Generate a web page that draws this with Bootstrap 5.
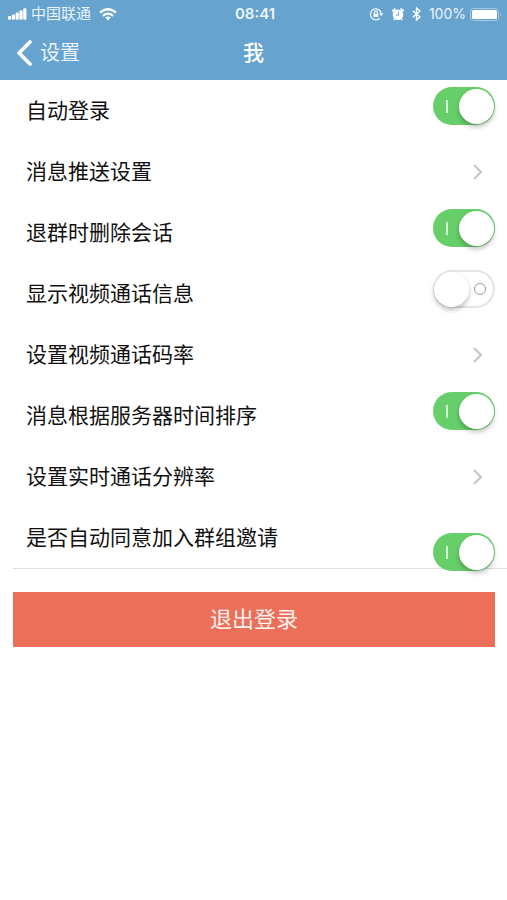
<!DOCTYPE html>
<html lang="zh-CN">
<head>
<meta charset="utf-8">
<meta name="viewport" content="width=device-width, initial-scale=1">
<title>设置</title>
<link href="https://cdn.jsdelivr.net/npm/bootstrap@5.3.0/dist/css/bootstrap.min.css" rel="stylesheet">
<style>
  body { font-family: "Liberation Sans", "Noto Sans CJK SC", sans-serif; color: #111; background: #fff; }
  .app-header { background: #66a3cf; color: #fff; }
  .status-bar { height: 28px; padding: 0 5px 0 8px; font-size: 15px; line-height: 28px; color: #eaf4fb; }
  .status-side { flex: 1 1 0; }
  .status-clock { font-family: Inter, sans-serif; font-size: 15px; font-weight: 600; }
  .status-level { font-family: Inter, sans-serif; font-size: 14px; }
  .title-bar { height: 52px; padding: 0 16px; }
  .title-bar h1 { font-size: 21px; font-weight: 500; line-height: 50px; }
  .back-link { font-size: 20px; line-height: 50px; color: #eaf4fb; gap: 7px; }
  .setting-row { height: 61px; padding: 0 12px 0 26px; font-size: 21px; line-height: 61px; color: #111; }
  a.setting-row { padding-right: 24px; }
  .toggle { appearance: none; display: flex; align-items: center; flex: none; width: 62px; height: 38px; margin: 7px 0 0; padding: 1px; border-radius: 19px; background: #67cf6a; cursor: pointer; }
  .toggle::before { content: ""; order: 2; width: 35px; height: 35px; margin-left: auto; border-radius: 50%; background: #fff; box-shadow: 0 3px 5px rgba(0, 0, 0, .25); }
  .toggle::after { content: ""; order: 1; width: 2px; height: 13px; margin-left: 12px; background: #d5f5d6; }
  .toggle:not(:checked) { background: #fff; box-shadow: inset 0 0 0 2px #e4e4e4; }
  .toggle:not(:checked)::before { order: 0; margin-left: 0; }
  .toggle:not(:checked)::after { width: 12px; height: 12px; margin: 0 8px 0 auto; border: 1px solid #999; border-radius: 50%; background: none; }
  .toggle-low { align-self: flex-end; margin: 0 0 -3px; }
  .list-end { margin-left: 13px; border-top: 1px solid #dedede; }
  .logout-area { padding: 23px 12px 0 13px; }
  .btn-logout, .btn-logout:hover { height: 55px; padding: 0; border: 0; border-radius: 0; background: #ec6f59; color: #fff1ee; font-size: 22px; }
</style>
<script defer src="https://cdn.jsdelivr.net/npm/bootstrap@5.3.0/dist/js/bootstrap.bundle.min.js"></script>
</head>
<body>
<header class="app-header">
  <div class="status-bar d-flex align-items-center">
    <div class="status-side d-flex align-items-center">
      <svg class="me-1" width="19" height="12" viewBox="0 0 20 12" fill="#fff" aria-hidden="true"><rect y="8" width="3.4" height="4" rx="1.3"/><rect x="4" y="6.5" width="3.4" height="5.5" rx="1.3"/><rect x="8" y="4.5" width="3.4" height="7.5" rx="1.3"/><rect x="12" y="2" width="3.4" height="10" rx="1.3"/><rect x="16" width="3.4" height="12" rx="1.3"/></svg>
      <span>中国联通</span>
      <svg class="ms-2" width="18" height="13" viewBox="0 0 18 13" fill="none" stroke="#fff" stroke-width="2.2" aria-hidden="true"><path d="M1 4.7Q9-2.2 17 4.7M3.9 7.8Q9 3.5 14.1 7.8"/><path d="M6.2 9.6Q9 7.4 11.8 9.6L9 12.6Z" fill="#fff" stroke="none"/></svg>
    </div>
    <span class="status-clock">08:41</span>
    <div class="status-side d-flex align-items-center justify-content-end">
      <svg width="15" height="14" viewBox="0 0 15 14" fill="none" stroke="#eaf4fb" stroke-width="1.3" aria-hidden="true"><path d="M10.8 11.2A5.5 5.5 0 1 1 12.3 6.5"/><path d="M10 6.2h4.6l-2.3 3z" fill="#eaf4fb" stroke="none"/><rect x="4.4" y="6.4" width="5" height="3.6" fill="#eaf4fb" stroke="none"/><path d="M5.4 6.6V5.3a1.5 1.5 0 0 1 3 0v1.3"/></svg>
      <svg class="mx-2" width="12" height="13" viewBox="0 0 12 13" aria-hidden="true"><circle cx="6" cy="6.7" r="5.3" fill="#fff"/><path d="M1 2.8 2.8 1.2M11 2.8 9.2 1.2" stroke="#fff" stroke-width="2" stroke-linecap="round"/><path d="M2.6 10.8 1.9 11.8M9.4 10.8l.7 1" stroke="#fff" stroke-width="1.2" stroke-linecap="round"/><path d="M6.6 3.9v3.2H3.8" fill="none" stroke="#66a3cf" stroke-width="1"/></svg>
      <svg class="me-2" width="9" height="14" viewBox="0 0 9 14" fill="none" stroke="#fff" stroke-width="1.4" aria-hidden="true"><path d="M.8 3.8 8 10 4.5 13V1L8 4 .8 10.2"/></svg>
      <span class="status-level">100%</span>
      <svg class="ms-1" width="32" height="13" viewBox="0 0 32 13" aria-hidden="true"><rect x=".5" y=".5" width="28" height="12" rx="3" fill="none" stroke="#a3c8e3"/><rect x="2" y="2" width="25" height="9" rx="1.5" fill="#fff"/><path d="M30 4.5v4q2-2 0-4z" fill="#a3c8e3"/></svg>
    </div>
  </div>
  <nav class="title-bar d-flex align-items-start" aria-label="导航">
    <div class="status-side"><a href="#" class="back-link d-inline-flex align-items-center text-decoration-none"><svg width="17" height="27" viewBox="0 0 17 27" fill="none" stroke="#fff" stroke-width="3.6" stroke-linecap="round" stroke-linejoin="round" aria-hidden="true"><path d="M14 2 3 13l11 11"/></svg>设置</a></div>
    <h1 class="m-0">我</h1>
    <div class="status-side"></div>
  </nav>
</header>
<main>
  <div class="setting-row d-flex justify-content-between align-items-start"><label for="auto-login">自动登录</label><input class="toggle" type="checkbox" role="switch" id="auto-login" checked></div>
  <a href="#" class="setting-row d-flex justify-content-between align-items-center text-decoration-none">消息推送设置<svg width="10" height="16" fill="none" stroke="#c5c5c9" stroke-width="2" aria-hidden="true"><path d="m1 1 7 7-7 7"/></svg></a>
  <div class="setting-row d-flex justify-content-between align-items-start"><label for="delete-chat">退群时删除会话</label><input class="toggle" type="checkbox" role="switch" id="delete-chat" checked></div>
  <div class="setting-row d-flex justify-content-between align-items-start"><label for="video-info">显示视频通话信息</label><input class="toggle" type="checkbox" role="switch" id="video-info"></div>
  <a href="#" class="setting-row d-flex justify-content-between align-items-center text-decoration-none">设置视频通话码率<svg width="10" height="16" fill="none" stroke="#c5c5c9" stroke-width="2" aria-hidden="true"><path d="m1 1 7 7-7 7"/></svg></a>
  <div class="setting-row d-flex justify-content-between align-items-start"><label for="server-sort">消息根据服务器时间排序</label><input class="toggle" type="checkbox" role="switch" id="server-sort" checked></div>
  <a href="#" class="setting-row d-flex justify-content-between align-items-center text-decoration-none">设置实时通话分辨率<svg width="10" height="16" fill="none" stroke="#c5c5c9" stroke-width="2" aria-hidden="true"><path d="m1 1 7 7-7 7"/></svg></a>
  <div class="setting-row d-flex justify-content-between align-items-start"><label for="auto-join">是否自动同意加入群组邀请</label><input class="toggle toggle-low position-relative z-1" type="checkbox" role="switch" id="auto-join" checked></div>
  <div class="list-end"></div>
  <div class="logout-area"><button type="button" class="btn btn-logout w-100">退出登录</button></div>
</main>
</body>
</html>
